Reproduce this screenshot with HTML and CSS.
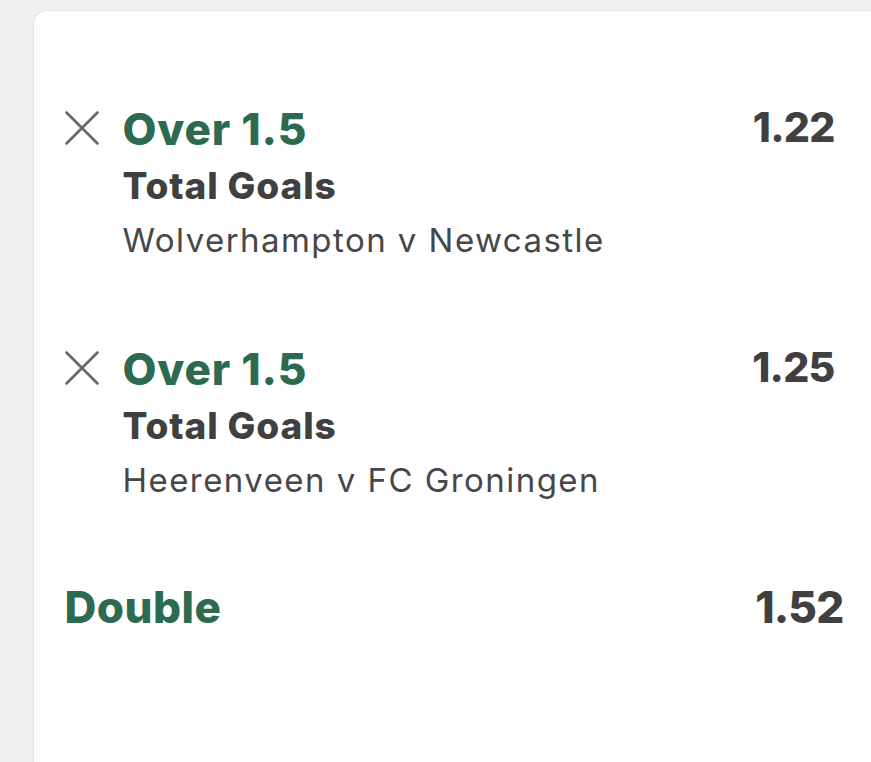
FILE: index.html
```html
<!DOCTYPE html>
<html lang="en">
<head>
<meta charset="utf-8">
<title>Bet slip</title>
<link rel="stylesheet" href="styles.css">
</head>
<body>
<div class="card">
  <div class="selection first">
    <svg class="remove" viewBox="0 0 34 34" width="34" height="34" aria-hidden="true">
      <path d="M1.5 1.5 L32.5 32.5 M32.5 1.5 L1.5 32.5" stroke="#666" stroke-width="2.6" stroke-linecap="round" fill="none"/>
    </svg>
    <div class="info">
      <div class="pick">Over 1.5</div>
      <div class="market">Total Goals</div>
      <div class="event">Wolverhampton v Newcastle</div>
    </div>
    <div class="odds">1.22</div>
  </div>
  <div class="selection">
    <svg class="remove" viewBox="0 0 34 34" width="34" height="34" aria-hidden="true">
      <path d="M1.5 1.5 L32.5 32.5 M32.5 1.5 L1.5 32.5" stroke="#666" stroke-width="2.6" stroke-linecap="round" fill="none"/>
    </svg>
    <div class="info">
      <div class="pick">Over 1.5</div>
      <div class="market">Total Goals</div>
      <div class="event">Heerenveen v FC Groningen</div>
    </div>
    <div class="odds">1.25</div>
  </div>
  <div class="total">
    <div class="total-label">Double</div>
    <div class="total-odds">1.52</div>
  </div>
</div>
</body>
</html>
```

FILE: styles.css
```css
html, body {
  margin: 0;
  padding: 0;
  background: #f0f0f0;
  overflow: hidden;
  height: 100%;
}

body {
  padding: 10px 0 0 33px;
  box-sizing: border-box;
  font-family: "Inter", "Liberation Sans", sans-serif;
}

.card {
  width: 838px;
  height: 752px;
  box-sizing: border-box;
  background: #ffffff;
  border: 1.5px solid #e2e2e2;
  border-right: none;
  border-bottom: none;
  border-radius: 14px 0 0 0;
  padding: 95.5px 35.5px 0 29.5px;
}

.selection {
  display: flex;
  align-items: flex-start;
}

.selection + .selection {
  margin-top: 89.5px;
}

.remove {
  flex: none;
  width: 34px;
  height: 34px;
  margin: 4px 0 0 1px;
}

.info {
  flex: 1;
  margin-left: 24px;
  display: flex;
  flex-direction: column;
}

.pick {
  font-size: 44px;
  line-height: 44px;
  font-weight: 800;
  color: #2d6a4f;
  letter-spacing: 0.8px;
}

.market {
  font-size: 37px;
  line-height: 37px;
  font-weight: 800;
  color: #404040;
  margin-top: 16px;
  letter-spacing: 0.9px;
}

.event {
  font-size: 33px;
  line-height: 33px;
  font-weight: 400;
  color: #474747;
  margin-top: 20.5px;
  letter-spacing: 1.45px;
}

.odds {
  flex: none;
  font-size: 41px;
  line-height: 41px;
  font-weight: 800;
  color: #404040;
  letter-spacing: -0.8px;
  margin-right: 1px;
}

.total {
  display: flex;
  justify-content: space-between;
  align-items: flex-start;
  margin: 87.5px -8px 0 1px;
}

.total-label {
  font-size: 44px;
  line-height: 44px;
  font-weight: 800;
  color: #2d6a4f;
  letter-spacing: 0.5px;
}

.total-odds {
  font-size: 44px;
  line-height: 44px;
  font-weight: 800;
  color: #404040;
  letter-spacing: -0.8px;
}
```
